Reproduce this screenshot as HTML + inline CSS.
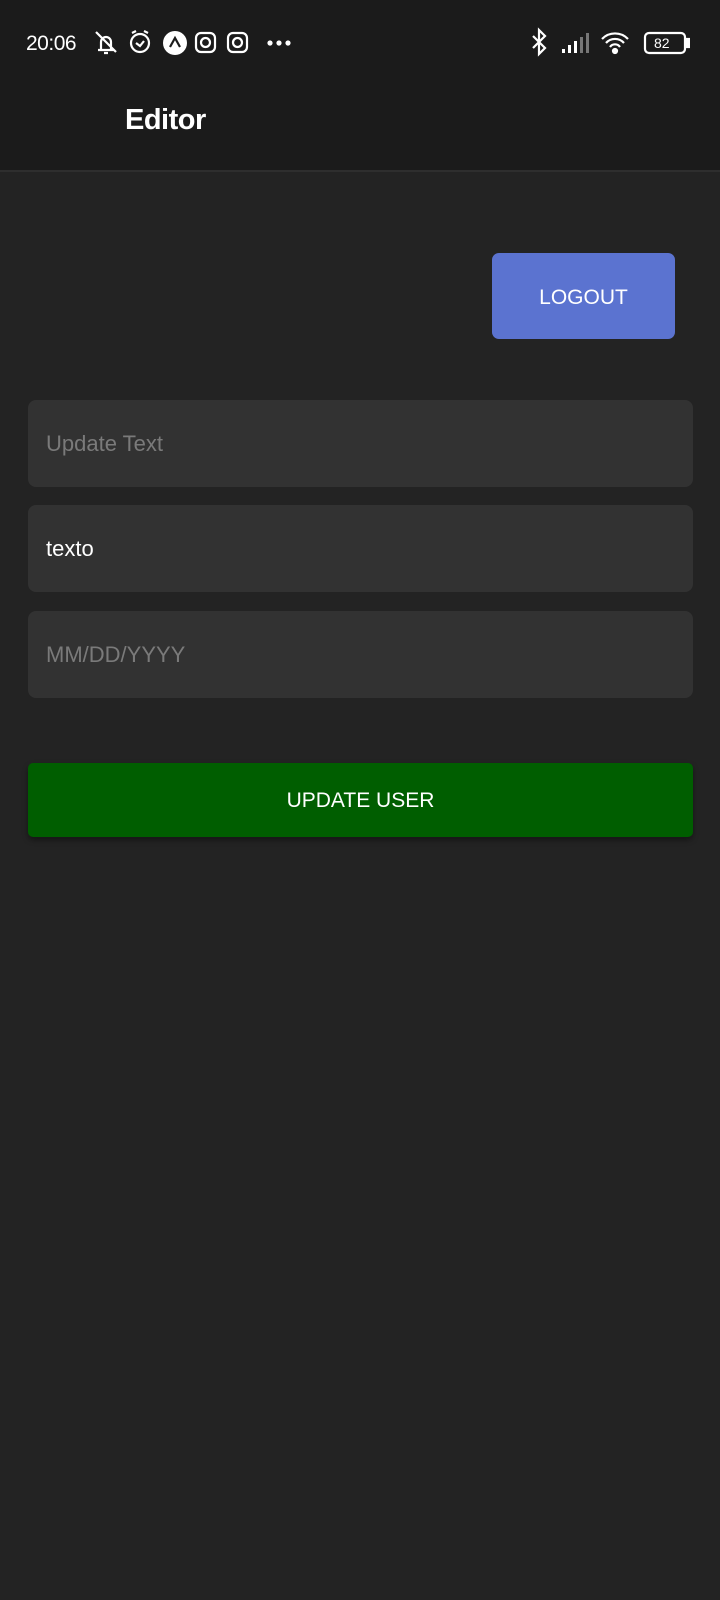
<!DOCTYPE html>
<html><head><meta charset="utf-8"><style>
body{margin:0;width:720px;height:1600px;background:#232323;font-family:"Liberation Sans",sans-serif;position:relative;overflow:hidden}
.hdr{position:absolute;left:0;top:0;width:720px;height:170px;background:#1b1b1b;border-bottom:2px solid #2e2e2e}
.abs{position:absolute}
.inp{position:absolute;left:28px;width:665px;height:87px;background:#323232;border-radius:8px;font-size:22px;line-height:87px;padding-left:18px;box-sizing:border-box;color:#7a7a7a}
</style></head><body>
<div class="hdr"></div>
<div class="abs" style="left:26px;top:32px;color:#fff;font-size:21px;letter-spacing:-0.5px">20:06</div>
<svg class="abs" style="left:90px;top:28px" width="210" height="30" viewBox="0 0 210 30" fill="none" stroke="#fff" stroke-width="2.2">
<path d="M8 22h16M11 22v-8a5 5 0 0 1 10 0v8M6 4l20 20M14 25h4"/>
<circle cx="50" cy="15" r="9"/><path d="M46 15l4 3 4-5M42 5l4-2M58 5l-4-2"/>
<circle cx="85" cy="15" r="12" fill="#fff" stroke="none"/><path d="M80 19l5-9 5 9" stroke="#1b1b1b"/>
<rect x="106" y="5" width="19" height="19" rx="5"/><circle cx="115.5" cy="14.5" r="4.5"/>
<rect x="138" y="5" width="19" height="19" rx="5"/><circle cx="147.5" cy="14.5" r="4.5"/>
<circle cx="180" cy="15" r="1.5" fill="#fff"/><circle cx="189" cy="15" r="1.5" fill="#fff"/><circle cx="198" cy="15" r="1.5" fill="#fff"/>
</svg>
<svg class="abs" style="left:530px;top:27px" width="160" height="32" viewBox="0 0 160 32" fill="none" stroke="#fff" stroke-width="2.2">
<path d="M3 9l12 12-6 6V3l6 6L3 21"/>
<g fill="#fff" stroke="none"><rect x="32" y="22" width="3" height="4"/><rect x="38" y="18" width="3" height="8"/><rect x="44" y="14" width="3" height="12"/><rect x="50" y="10" width="3" height="16" fill="#777"/><rect x="56" y="6" width="3" height="20" fill="#777"/></g>
<path d="M72 12a18 18 0 0 1 26 0M76 16a12 12 0 0 1 18 0M80 20a6 6 0 0 1 10 0"/><circle cx="85" cy="24" r="2" fill="#fff"/>
<rect x="115" y="6" width="40" height="20" rx="4"/><rect x="156" y="12" width="3" height="8" fill="#fff"/>
</svg>
<div class="abs" style="left:654px;top:35px;color:#fff;font-size:14px;">82</div>
<div class="abs" style="left:125px;top:104px;color:#fff;font-size:29px;font-weight:bold;letter-spacing:-0.5px">Editor</div>
<div class="abs" style="left:492px;top:253px;width:183px;height:86px;background:#5b73d0;border-radius:7px;color:#fff;font-size:21px;line-height:90px;text-align:center;">LOGOUT</div>
<div class="inp" style="top:400px">Update Text</div>
<div class="inp" style="top:505px;color:#fff">texto</div>
<div class="inp" style="top:611px">MM/DD/YYYY</div>
<div class="abs" style="left:28px;top:763px;width:665px;height:74px;background:#005e00;border-radius:5px;color:#fff;font-size:21px;line-height:76px;text-align:center;box-shadow:0 3px 6px rgba(0,0,0,.4)">UPDATE USER</div>
</body></html>
